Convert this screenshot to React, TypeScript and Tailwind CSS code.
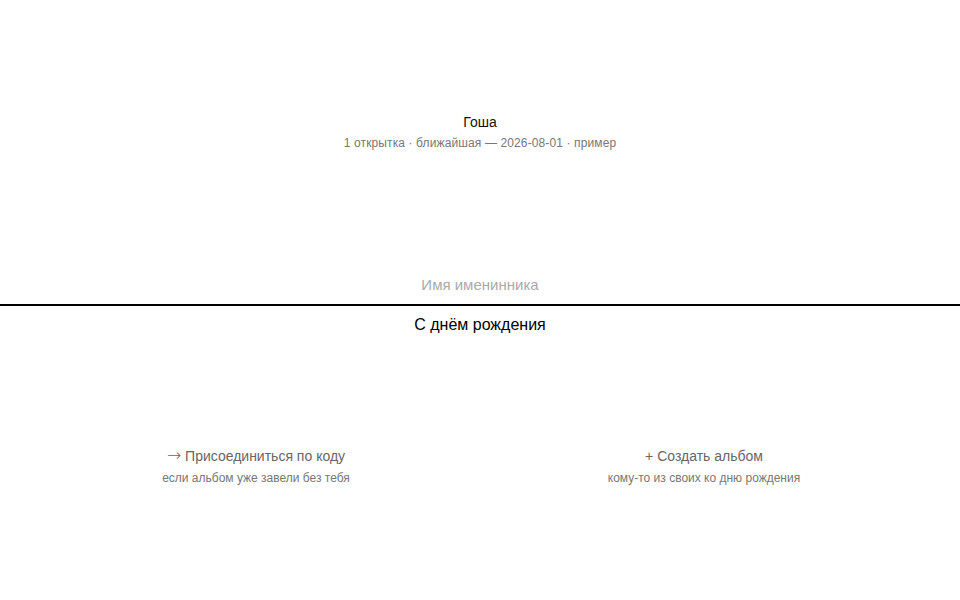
import React from 'react';

const Action = ({ icon, title, hint }: { icon: string; title: string; hint: string }) => (
  <button className="flex flex-col items-center text-center">
    <span className="text-sm leading-5 text-[#666]">
      <span className={icon === '→' ? "font-['DejaVu_Sans',sans-serif] text-[17px] leading-none font-extralight" : ''}>{icon}</span> {title}
    </span>
    <span className="mt-1 text-xs leading-4 text-[#777]">{hint}</span>
  </button>
);

export default function App() {
  const [name, setName] = React.useState('');
  return (
    <div className="min-h-screen bg-white font-['Liberation_Sans',Arial,sans-serif] text-black">
      <section className="pt-[112px] text-center">
        <p className="text-sm leading-5 text-[#111]">Гоша</p>
        <p className="mt-[3px] text-xs leading-4 tracking-[0.01em] text-[#777]">
          1 открытка · ближайшая — 2026-08-01 · пример
        </p>
      </section>

      <div className="mt-[124px]">
        <input
          value={name}
          onChange={(e) => setName(e.target.value)}
          placeholder="Имя именинника"
          className="block w-full border-b-2 border-black bg-transparent pb-[9px] text-center text-[15px] leading-5 outline-none placeholder:text-[#aaa]"
        />
        <p className="mt-[7px] text-center text-base leading-6">С днём рождения</p>
      </div>

      <div className="mt-[109px] grid grid-cols-2 px-8">
        <Action icon="→" title="Присоединиться по коду" hint="если альбом уже завели без тебя" />
        <Action icon="+" title="Создать альбом" hint="кому-то из своих ко дню рождения" />
      </div>
    </div>
  );
}
